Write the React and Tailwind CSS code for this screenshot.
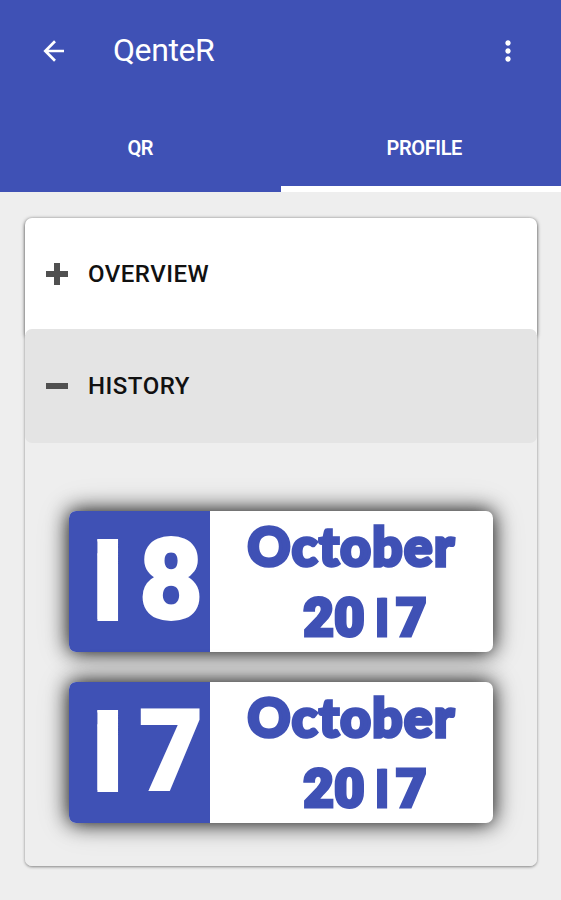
import { MdMoreVert } from "react-icons/md";

const history = [
  { day: "18", month: "October", year: "2017" },
  { day: "17", month: "October", year: "2017" },
];

function BackIcon() {
  return (
    <svg
      className="w-[22px] h-[22px] shrink-0"
      viewBox="0 0 22 22"
      fill="none"
      stroke="#ffffff"
      strokeWidth="2.7"
    >
      <path d="M21 11H2.5M12 1.3L2.3 11l9.7 9.7" />
    </svg>
  );
}

function PlusIcon() {
  return (
    <svg className="w-[22px] h-[22px]" viewBox="0 0 22 22" fill="#505050">
      <path d="M8 0h6v8h8v6h-8v8H8v-8H0V8h8z" />
    </svg>
  );
}

function MinusIcon() {
  return (
    <svg className="w-[22px] h-[22px]" viewBox="0 0 22 22" fill="#505050">
      <path d="M0 8h22v6H0z" />
    </svg>
  );
}

function Header() {
  return (
    <header className="h-48 bg-[#3f51b5] text-white flex flex-col">
      <div className="h-[102px] flex items-center pl-[43px] pr-[37px]">
        <BackIcon />
        <h1 className="ml-[48px] pb-[2px] flex-1 text-[32px] tracking-[-0.4px] leading-none">
          QenteR
        </h1>
        <MdMoreVert className="w-[32px] h-[32px]" />
      </div>
      <nav className="grid grid-cols-2 flex-1 text-[20px] font-semibold tracking-[-0.4px]">
        <button className="flex items-center justify-center border-b-[6px] border-transparent pt-[8px]">
          QR
        </button>
        <button className="flex items-center justify-center border-b-[6px] border-white pt-[8px] pl-[7px]">
          PROFILE
        </button>
      </nav>
    </header>
  );
}

// The "1" is a plain bar, so the flag is clipped off and the stem thickened.
function DayDigit({ digit }) {
  if (digit === "1") {
    return (
      <span className="inline-block origin-[0_98px] -translate-x-[6px] scale-y-[1.05] [-webkit-text-stroke:4px_white] [clip-path:inset(20px_0_16px_28px)]">
        1
      </span>
    );
  }
  return <span className="inline-block origin-left scale-x-[0.97] -translate-x-px">{digit}</span>;
}

function YearDigit({ digit }) {
  if (digit === "1") {
    return (
      <span className="inline-block origin-[13px_56px] -translate-x-px scale-y-[1.06] [clip-path:inset(17px_0_0_13px)]">
        1
      </span>
    );
  }
  return <span>{digit}</span>;
}

function DateCard({ day, month, year }) {
  return (
    <div className="flex h-[141px] rounded-[7px] overflow-hidden bg-white text-[#3f51b5] shadow-[0_0_20px_rgba(0,0,0,0.95),0_0_34px_rgba(0,0,0,0.2)] font-black">
      <div className="w-[141px] bg-[#3f51b5] text-white flex items-center justify-center">
        <div className="flex text-[114px] leading-none tracking-[-2px] -mt-[4px] font-['Roboto',sans-serif] [-webkit-text-stroke:2px_white]">
          {day.split("").map((digit, i) => (
            <DayDigit key={i} digit={digit} />
          ))}
        </div>
      </div>
      <div className="flex-1 flex flex-col items-center justify-center leading-[71px]">
        <span className="-mt-[2px] text-[53px] tracking-[1.5px] font-['Lato',sans-serif] [-webkit-text-stroke:3.5px_#3f51b5]">
          {month}
        </span>
        <div className="mt-[2px] -mb-[2px] flex gap-px text-[53px] tracking-[-0.8px] pl-[26px] font-['Roboto',sans-serif] [-webkit-text-stroke:3px_#3f51b5]">
          {year.split("").map((digit, i) => (
            <YearDigit key={i} digit={digit} />
          ))}
        </div>
      </div>
    </div>
  );
}

export default function App() {
  return (
    <div className="w-[561px] h-[900px] bg-[#eeeeee] font-['Roboto',sans-serif] overflow-hidden">
      <Header />
      <main className="pt-[26px] pl-[25px] pr-[24px]">
        <section className="h-[648px] rounded-[7px] shadow-[0_1px_3px_rgba(0,0,0,0.45)] text-[24px] tracking-[0.5px] font-medium text-[#111111]">
          <div className="h-[117px] flex items-center gap-5 pl-[21px] pb-[5px] rounded-t-[7px] bg-white shadow-[0_1px_4px_rgba(0,0,0,0.45)]">
            <PlusIcon />
            <span className="pb-px">OVERVIEW</span>
          </div>
          <div className="relative -mt-[6px] h-[114px] flex items-center gap-5 pl-[21px] rounded-[7px] bg-[#e4e4e4]">
            <MinusIcon />
            <span className="pb-px">HISTORY</span>
          </div>
          <div className="relative bg-[#eeeeee] rounded-b-[7px] h-[423px] flex flex-col gap-[30px] pt-[68px] pl-[44px] pr-[44px]">
            {history.map((item) => (
              <DateCard key={item.day} {...item} />
            ))}
          </div>
        </section>
      </main>
    </div>
  );
}
